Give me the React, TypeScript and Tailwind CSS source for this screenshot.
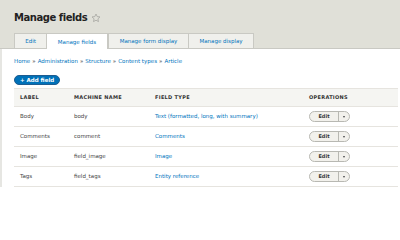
const font = { fontFamily: '"DejaVu Sans", "Liberation Sans", sans-serif' };

const tabs = [
  { name: "Edit", w: "w-[32px]", active: false },
  { name: "Manage fields", w: "w-[62px]", active: true },
  { name: "Manage form display", w: "w-[80px]", active: false },
  { name: "Manage display", w: "w-[66px]", active: false },
];

const fields = [
  { label: "Body", machine: "body", type: "Text (formatted, long, with summary)" },
  { label: "Comments", machine: "comment", type: "Comments" },
  { label: "Image", machine: "field_image", type: "Image" },
  { label: "Tags", machine: "field_tags", type: "Entity reference" },
];

const crumbs = ["Home", "Administration", "Structure", "Content types", "Article"];

function Star() {
  return (
    <svg width="10" height="10" viewBox="0 0 24 24" className="ml-[4px]">
      <path
        d="M12 2.5l2.9 6.1 6.6.8-4.9 4.6 1.3 6.6L12 17.3l-5.9 3.3 1.3-6.6-4.9-4.6 6.6-.8z"
        fill="none"
        stroke="#9a9a95"
        strokeWidth="1.6"
        strokeLinejoin="round"
      />
    </svg>
  );
}

function EditButton() {
  return (
    <div className="flex h-[11px] w-[41px] items-stretch rounded-full border border-[#b8b8b2] bg-[#f2f1ec] text-[5px] font-bold text-[#333]">
      <div className="flex flex-1 items-center justify-center">Edit</div>
      <div className="flex w-[11px] items-center justify-center border-l border-[#b8b8b2]">
        <span className="block h-0 w-0 border-x-[1.5px] border-t-[2px] border-x-transparent border-t-[#444]" />
      </div>
    </div>
  );
}

export default function App() {
  return (
    <div style={font} className="relative h-[222px] w-[400px] overflow-hidden bg-white text-[#333]">
      <div className="flex h-[49px] flex-col border-b border-[#c9c9c3] bg-[#e0e0d8] pl-[14px]">
        <div className="flex h-[34px] items-center pt-[2px]">
          <h1 className="text-[10px] font-bold leading-none tracking-[-0.45px] text-[#222]">Manage fields</h1>
          <Star />
        </div>
        <div className="flex h-[15px] items-stretch">
          {tabs.map((t) => (
            <div
              key={t.name}
              className={
                t.active
                  ? `${t.w} -mb-px flex items-center justify-center border-x border-t border-[#c9c9c3] bg-white text-[5.5px] text-[#0074bd]`
                  : `${t.w} flex items-center justify-center border-l border-t border-[#c9c9c3] bg-[#f0f0ec] text-[5.5px] text-[#0074bd] last:border-r`
              }
            >
              {t.name}
            </div>
          ))}
        </div>
      </div>
      <div className="border-l-2 border-[#e6e6e2] pl-[12px] pr-[2px]">
        <div className="flex h-[24px] items-center gap-[2px] pt-[1px] text-[5.5px] text-[#0074bd]">
          {crumbs.map((c, i) => (
            <span key={c} className="flex gap-[2px]">
              {i > 0 && <span className="text-[#555]">»</span>}
              <span>{c}</span>
            </span>
          ))}
        </div>
        <div className="flex h-[15px] items-start pt-[2px]">
          <div className="flex h-[10px] items-center rounded-full border border-[#1e5c90] bg-[#0071b8] px-[5px] text-[5.5px] font-bold text-white">
            + Add field
          </div>
        </div>
        <table className="w-full border-collapse text-left text-[5.5px]">
          <thead>
            <tr className="h-[18px] border-t border-[#e6e4df] bg-[#f5f5f2] text-[5px] font-bold tracking-[0.3px] text-[#333]">
              <th className="w-[54px] pl-[6px] font-bold">LABEL</th>
              <th className="w-[81px] pl-[6px] font-bold">MACHINE NAME</th>
              <th className="w-[154px] pl-[6px] font-bold">FIELD TYPE</th>
              <th className="pl-[6px] font-bold">OPERATIONS</th>
            </tr>
          </thead>
          <tbody>
            {fields.map((f) => (
              <tr key={f.label} className="h-[20px] border-t border-[#e6e4df] last:border-b">
                <td className="pl-[6px] text-[#444]">{f.label}</td>
                <td className="pl-[6px] text-[#444]">{f.machine}</td>
                <td className="pl-[6px] text-[#0074bd]">{f.type}</td>
                <td className="pl-[6px]">
                  <EditButton />
                </td>
              </tr>
            ))}
          </tbody>
        </table>
      </div>
    </div>
  );
}
